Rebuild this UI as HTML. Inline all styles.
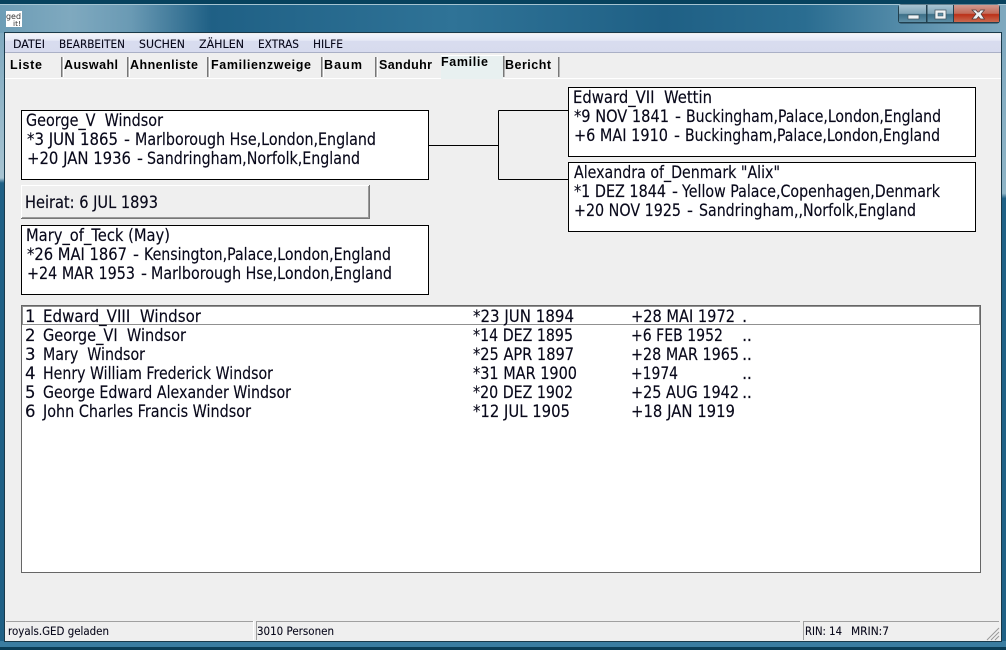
<!DOCTYPE html>
<html><head><meta charset="utf-8"><style>
html,body{margin:0;padding:0;width:1006px;height:650px;overflow:hidden;background:#1f6085}
svg{display:block}
text{font-family:"DejaVu Sans",sans-serif;font-size:16.5px;fill:#08081a;stroke:#08081a;stroke-width:.15px;white-space:pre}
text.m{font-size:11.5px;stroke-width:.1px}
text.t{font-family:"Liberation Sans",sans-serif;font-weight:bold;font-size:12.5px;fill:#000;stroke:none}
</style></head><body>
<svg width="1006" height="650" viewBox="0 0 1006 650" xmlns="http://www.w3.org/2000/svg">
<defs>
<linearGradient id="title" x1="0" x2="1" y1="0" y2="0">
<stop offset="0" stop-color="#6d9db6"/><stop offset=".07" stop-color="#7fa9bf"/><stop offset=".13" stop-color="#6a9ab4"/><stop offset=".21" stop-color="#1f6085"/><stop offset=".45" stop-color="#2f7397"/><stop offset=".66" stop-color="#1f6085"/><stop offset=".8" stop-color="#2a6d91"/><stop offset=".95" stop-color="#6b9cb6"/><stop offset="1" stop-color="#7fa9bf"/>
</linearGradient>
<linearGradient id="lf" x1="0" x2="0" y1="0" y2="1"><stop offset="0" stop-color="#7fa9bf"/><stop offset=".235" stop-color="#a8c4d2"/><stop offset=".243" stop-color="#1f6085"/><stop offset="1" stop-color="#1f6085"/></linearGradient>
<linearGradient id="rf" x1="0" x2="0" y1="0" y2="1"><stop offset="0" stop-color="#7fa9bf"/><stop offset=".26" stop-color="#8fb4c6"/><stop offset=".268" stop-color="#1f6085"/><stop offset="1" stop-color="#1f6085"/></linearGradient>
<linearGradient id="menu" x1="0" x2="0" y1="0" y2="1"><stop offset="0" stop-color="#f2f4fb"/><stop offset=".35" stop-color="#e6e9f6"/><stop offset=".4" stop-color="#d8dcef"/><stop offset="1" stop-color="#d7dbee"/></linearGradient>
<linearGradient id="btn" x1="0" x2="0" y1="0" y2="1"><stop offset="0" stop-color="#a8c4d2"/><stop offset=".5" stop-color="#7fa5b8"/><stop offset=".55" stop-color="#3d7088"/><stop offset="1" stop-color="#5d8ea5"/></linearGradient>
<linearGradient id="cls" x1="0" x2="0" y1="0" y2="1"><stop offset="0" stop-color="#d09a90"/><stop offset=".5" stop-color="#c26a58"/><stop offset=".55" stop-color="#bb3018"/><stop offset="1" stop-color="#c96a50"/></linearGradient>
</defs>

<!-- window frame -->
<rect width="1006" height="650" fill="#1f6085"/>
<rect x="0" y="5" width="1006" height="28" fill="url(#title)"/>
<rect x="0" y="0" width="1006" height="4" fill="#07425e"/>
<rect x="0" y="4" width="1006" height="1" fill="#a5c4d2"/>
<rect x="0" y="33" width="5" height="617" fill="url(#lf)"/>
<rect x="1001" y="33" width="5" height="617" fill="url(#rf)"/>
<rect x="0" y="641" width="1006" height="6" fill="#3a7ca0"/>
<rect x="0" y="647" width="1006" height="3" fill="#0a3c55"/>

<!-- app icon -->
<rect x="6" y="11" width="16" height="16" fill="#fff"/>
<text class="m" x="6" y="19" style="font-size:8px;fill:#333;stroke:none" textLength="15" lengthAdjust="spacingAndGlyphs">ged</text>
<text class="m" x="13" y="26" style="font-size:7px;fill:#333;stroke:none" textLength="8" lengthAdjust="spacingAndGlyphs">it!</text>

<!-- caption buttons -->
<rect x="898" y="4.500" width="102" height="19" rx="3" fill="#22404f"/>
<rect x="899" y="5" width="27" height="17" fill="url(#btn)"/>
<rect x="927.500" y="5" width="25.500" height="17" fill="url(#btn)"/>
<rect x="954" y="5" width="45" height="17" fill="url(#cls)"/>
<rect x="908" y="15" width="11" height="4" fill="#eef3f6" stroke="#3c4f5a" stroke-width=".7"/>
<rect x="935" y="10" width="11" height="9" fill="#f0f4f6" stroke="#3c4f5a" stroke-width=".7"/>
<rect x="938" y="13" width="5" height="3" fill="#5d8ea5" stroke="#3c4f5a" stroke-width=".5"/>
<path d="M972 10 L976 10 L977.500 12 L979 12 L980.500 10 L984.500 10 L981 14 L984.500 19 L980.500 19 L978.500 16.500 L976.500 19 L972 19 L976 14 Z" fill="#eef2f4" stroke="#4b3b3b" stroke-width=".7"/>

<!-- client -->
<rect x="4" y="32" width="998" height="610" fill="#19394a"/>
<rect x="5" y="33" width="996" height="608" fill="#efefef"/>
<rect x="5" y="34" width="996" height="18" fill="url(#menu)"/>
<rect x="5" y="52" width="996" height="1" fill="#aab0c6"/>

<text class="m" x="13" y="48" textLength="32" lengthAdjust="spacingAndGlyphs">DATEI</text>
<text class="m" x="59" y="48" textLength="66" lengthAdjust="spacingAndGlyphs">BEARBEITEN</text>
<text class="m" x="139" y="48" textLength="46" lengthAdjust="spacingAndGlyphs">SUCHEN</text>
<text class="m" x="199" y="48" textLength="45" lengthAdjust="spacingAndGlyphs">ZÄHLEN</text>
<text class="m" x="258" y="48" textLength="41" lengthAdjust="spacingAndGlyphs">EXTRAS</text>
<text class="m" x="313" y="48" textLength="30" lengthAdjust="spacingAndGlyphs">HILFE</text>

<!-- tabs -->
<rect x="5" y="78" width="996" height="1" fill="#fff"/>
<rect x="441" y="55" width="62" height="24" fill="#e8f0f0"/>
<rect x="441" y="55" width="62" height="1" fill="#fff"/>
<g fill="#777">
<rect x="61" y="57" width="1.500" height="20"/><rect x="127" y="57" width="1.500" height="20"/><rect x="207" y="57" width="1.500" height="20"/><rect x="321" y="57" width="1.500" height="20"/><rect x="375" y="57" width="1.500" height="20"/><rect x="503" y="56" width="1.500" height="21"/><rect x="558" y="57" width="1.500" height="20"/>
</g>
<g fill="#fff">
<rect x="63" y="57" width="1" height="20"/><rect x="129" y="57" width="1" height="20"/><rect x="209" y="57" width="1" height="20"/><rect x="323" y="57" width="1" height="20"/><rect x="377" y="57" width="1" height="20"/>
</g>
<text class="t" x="10" y="69" textLength="32" lengthAdjust="spacing">Liste</text>
<text class="t" x="64" y="69" textLength="54" lengthAdjust="spacing">Auswahl</text>
<text class="t" x="130" y="69" textLength="68" lengthAdjust="spacing">Ahnenliste</text>
<text class="t" x="211" y="69" textLength="100" lengthAdjust="spacing">Familienzweige</text>
<text class="t" x="324" y="69" textLength="38" lengthAdjust="spacing">Baum</text>
<text class="t" x="379" y="69" textLength="53" lengthAdjust="spacing">Sanduhr</text>
<text class="t" x="441" y="66" textLength="47" lengthAdjust="spacing">Familie</text>
<text class="t" x="505" y="69" textLength="46" lengthAdjust="spacing">Bericht</text>

<!-- connector lines -->
<path d="M428 145.500H498.500M498.500 110.500V179.500M498.500 110.500H568M498.500 179.500H568" fill="none" stroke="#000" stroke-width="1"/>

<!-- person boxes -->
<rect x="21.500" y="110.500" width="407" height="69" fill="#fff" stroke="#000"/>
<text x="26" y="126" textLength="137" lengthAdjust="spacingAndGlyphs">George_V  Windsor</text>
<text x="27" y="145" textLength="91" lengthAdjust="spacingAndGlyphs">*3 JUN 1865</text><text x="124" y="145" textLength="6" lengthAdjust="spacingAndGlyphs">-</text><text x="135" y="145" textLength="241" lengthAdjust="spacingAndGlyphs">Marlborough Hse,London,England</text>
<text x="27" y="164" textLength="104" lengthAdjust="spacingAndGlyphs">+20 JAN 1936</text><text x="137" y="164" textLength="6" lengthAdjust="spacingAndGlyphs">-</text><text x="147" y="164" textLength="213" lengthAdjust="spacingAndGlyphs">Sandringham,Norfolk,England</text>

<rect x="21" y="185" width="349" height="34" fill="#777"/>
<rect x="21" y="185" width="348" height="33" fill="#fff"/>
<rect x="22" y="186" width="347" height="32" fill="#9a9a9a"/>
<rect x="22" y="186" width="346" height="31" fill="#efefef"/>
<text x="25" y="208" textLength="133" lengthAdjust="spacingAndGlyphs">Heirat: 6 JUL 1893</text>

<rect x="21.500" y="225.500" width="407" height="69" fill="#fff" stroke="#000"/>
<text x="26" y="241" textLength="144" lengthAdjust="spacingAndGlyphs">Mary_of_Teck (May)</text>
<text x="27" y="260" textLength="100" lengthAdjust="spacingAndGlyphs">*26 MAI 1867</text><text x="133" y="260" textLength="6" lengthAdjust="spacingAndGlyphs">-</text><text x="144" y="260" textLength="247" lengthAdjust="spacingAndGlyphs">Kensington,Palace,London,England</text>
<text x="27" y="279" textLength="108" lengthAdjust="spacingAndGlyphs">+24 MAR 1953</text><text x="141" y="279" textLength="6" lengthAdjust="spacingAndGlyphs">-</text><text x="151" y="279" textLength="241" lengthAdjust="spacingAndGlyphs">Marlborough Hse,London,England</text>

<rect x="568.500" y="87.500" width="407" height="69" fill="#fff" stroke="#000"/>
<text x="573" y="103" textLength="139" lengthAdjust="spacingAndGlyphs">Edward_VII  Wettin</text>
<text x="574" y="122" textLength="95" lengthAdjust="spacingAndGlyphs">*9 NOV 1841</text><text x="675" y="122" textLength="6" lengthAdjust="spacingAndGlyphs">-</text><text x="686" y="122" textLength="255" lengthAdjust="spacingAndGlyphs">Buckingham,Palace,London,England</text>
<text x="574" y="141" textLength="94" lengthAdjust="spacingAndGlyphs">+6 MAI 1910</text><text x="674" y="141" textLength="6" lengthAdjust="spacingAndGlyphs">-</text><text x="685" y="141" textLength="255" lengthAdjust="spacingAndGlyphs">Buckingham,Palace,London,England</text>

<rect x="568.500" y="162.500" width="407" height="69" fill="#fff" stroke="#000"/>
<text x="574" y="178" textLength="206" lengthAdjust="spacingAndGlyphs">Alexandra of_Denmark "Alix"</text>
<text x="574" y="197" textLength="92" lengthAdjust="spacingAndGlyphs">*1 DEZ 1844</text><text x="672" y="197" textLength="6" lengthAdjust="spacingAndGlyphs">-</text><text x="682" y="197" textLength="258" lengthAdjust="spacingAndGlyphs">Yellow Palace,Copenhagen,Denmark</text>
<text x="574" y="216" textLength="107" lengthAdjust="spacingAndGlyphs">+20 NOV 1925</text><text x="687" y="216" textLength="6" lengthAdjust="spacingAndGlyphs">-</text><text x="699" y="216" textLength="217" lengthAdjust="spacingAndGlyphs">Sandringham,,Norfolk,England</text>

<!-- list -->
<rect x="21.500" y="305.500" width="959" height="267" fill="#fff" stroke="#666"/>
<rect x="22.500" y="306.500" width="957" height="18" fill="none" stroke="#222" stroke-dasharray="1 1" shape-rendering="crispEdges"/>

<text x="25" y="322">1</text><text x="43" y="322" textLength="158" lengthAdjust="spacingAndGlyphs">Edward_VIII  Windsor</text>
<text x="473" y="322" textLength="101" lengthAdjust="spacingAndGlyphs">*23 JUN 1894</text><text x="631" y="322" textLength="104" lengthAdjust="spacingAndGlyphs">+28 MAI 1972</text><text x="742" y="322">.</text>
<text x="25" y="341">2</text><text x="43" y="341" textLength="143" lengthAdjust="spacingAndGlyphs">George_VI  Windsor</text>
<text x="473" y="341" textLength="100" lengthAdjust="spacingAndGlyphs">*14 DEZ 1895</text><text x="631" y="341" textLength="92" lengthAdjust="spacingAndGlyphs">+6 FEB 1952</text><text x="742" y="341" textLength="10" lengthAdjust="spacing">..</text>
<text x="25" y="360">3</text><text x="43" y="360" textLength="102" lengthAdjust="spacingAndGlyphs">Mary  Windsor</text>
<text x="473" y="360" textLength="101" lengthAdjust="spacingAndGlyphs">*25 APR 1897</text><text x="631" y="360" textLength="108" lengthAdjust="spacingAndGlyphs">+28 MAR 1965</text><text x="742" y="360" textLength="10" lengthAdjust="spacing">..</text>
<text x="25" y="379">4</text><text x="43" y="379" textLength="230" lengthAdjust="spacingAndGlyphs">Henry William Frederick Windsor</text>
<text x="473" y="379" textLength="104" lengthAdjust="spacingAndGlyphs">*31 MAR 1900</text><text x="631" y="379" textLength="47" lengthAdjust="spacingAndGlyphs">+1974</text><text x="742" y="379" textLength="10" lengthAdjust="spacing">..</text>
<text x="25" y="398">5</text><text x="43" y="398" textLength="248" lengthAdjust="spacingAndGlyphs">George Edward Alexander Windsor</text>
<text x="473" y="398" textLength="100" lengthAdjust="spacingAndGlyphs">*20 DEZ 1902</text><text x="631" y="398" textLength="108" lengthAdjust="spacingAndGlyphs">+25 AUG 1942</text><text x="742" y="398" textLength="10" lengthAdjust="spacing">..</text>
<text x="25" y="417">6</text><text x="43" y="417" textLength="208" lengthAdjust="spacingAndGlyphs">John Charles Francis Windsor</text>
<text x="473" y="417" textLength="97" lengthAdjust="spacingAndGlyphs">*12 JUL 1905</text><text x="631" y="417" textLength="104" lengthAdjust="spacingAndGlyphs">+18 JAN 1919</text>

<!-- status bar -->
<g fill="#a0a0a0">
<rect x="6" y="621" width="247" height="1"/><rect x="256" y="621" width="544" height="1"/><rect x="803" y="621" width="196" height="1"/>
<rect x="253" y="621" width="1" height="19" fill="#fff"/><rect x="256" y="621" width="1" height="19"/><rect x="803" y="621" width="1" height="19"/>
</g>
<text class="m" x="8" y="635" textLength="101" lengthAdjust="spacingAndGlyphs">royals.GED geladen</text>
<text class="m" x="257" y="635" textLength="77" lengthAdjust="spacingAndGlyphs">3010 Personen</text>
<text class="m" x="805" y="635" textLength="37" lengthAdjust="spacingAndGlyphs">RIN: 14</text>
<text class="m" x="851" y="635" textLength="38" lengthAdjust="spacingAndGlyphs">MRIN:7</text>
<path d="M987 640L999 628M991 640L999 632M995 640L999 636" stroke="#999" stroke-width="1" fill="none"/>
</svg>
</body></html>
